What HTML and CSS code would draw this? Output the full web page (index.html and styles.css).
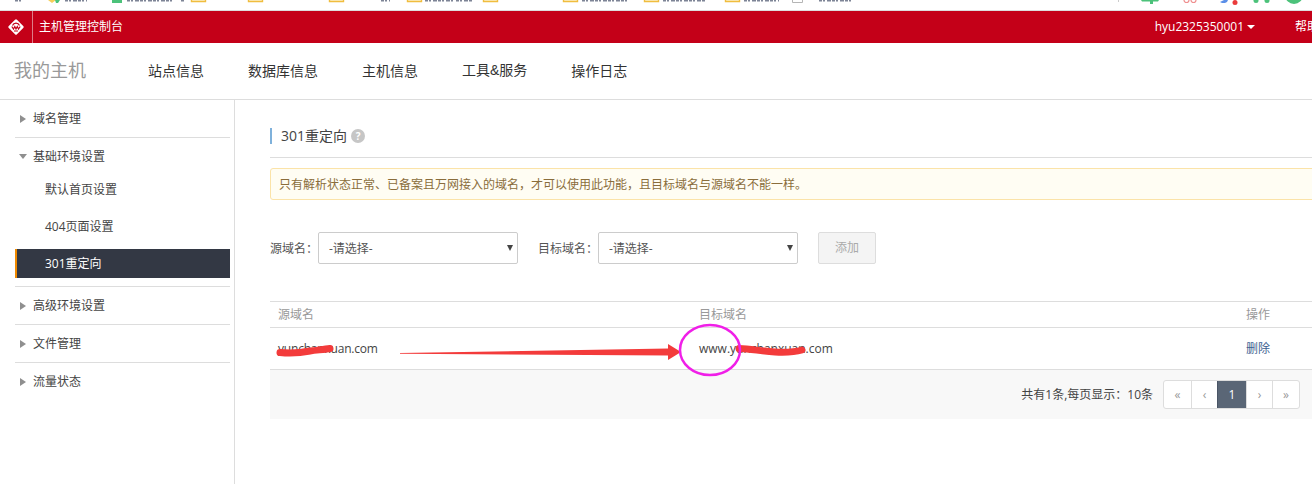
FILE: index.html
```html
<!DOCTYPE html>
<html lang="zh-CN">
<head>
<meta charset="utf-8">
<title>主机管理控制台</title>
<link rel="stylesheet" href="styles.css">
</head>
<body>
<div class="page">
  <svg class="chrome" width="1312" height="10" viewBox="0 0 1312 10" aria-hidden="true">
    <path class="bits" d="M15 .8h6M65 .8h22M127 .8h45M181 .8h3M381 .8h9M425 .8h28M456 .8h16M582 .8h46M663 .8h42M744 .8h35M819 .8h32"/>
    <g class="folder">
      <path d="M191.500 0v1.500h14V0"/><path d="M248.500 0v1.500h14V0"/><path d="M329.500 0v1.500h14V0"/><path d="M407.500 0v1.500h14V0"/>
      <path d="M483.500 0v1.500h14V0"/><path d="M563.500 0v1.500h14V0"/><path d="M644.500 0v1.500h14V0"/><path d="M725.500 0v1.500h14V0"/>
    </g>
    <path class="star" d="M48 0l4 3 4-3z"/>
    <path class="green" d="M55 0h5l-2 3h-2z"/>
    <rect class="green" x="112" y="0" width="10" height="3"/>
    <path class="box" d="M792.500 0v2.500h10V0"/>
    <rect class="divider" x="1118" y="0" width="1" height="2"/>
    <path class="green" d="M1141 0h18l-1 1.500h-5v2.500h-3v-2.500h-8z"/>
    <path class="rings" d="M1184 0a2.500 2.500 0 0 0 5 0M1191 0a2.500 2.500 0 0 0 5 0"/>
    <path class="blue" d="M1220 2l4-2h4l-1 2-2 1h-3z"/>
    <circle class="red" cx="1235" cy="2.500" r="2.500"/>
    <circle class="green" cx="1256" cy="0.500" r="2.500"/><circle class="green" cx="1267" cy="0.500" r="2.500"/>
    <circle class="green" cx="1294" cy="-5" r="9"/>
  </svg>

  <header class="topbar">
    <div class="brand-mark">
      <svg width="16" height="16" viewBox="0 0 16 16" aria-hidden="true">
        <path class="logo-d" d="M7 .8a1.400 1.400 0 0 1 2 0l6.200 6.200a1.400 1.400 0 0 1 0 2L9 15.200a1.400 1.400 0 0 1-2 0L.8 9a1.400 1.400 0 0 1 0-2z"/>
        <path class="logo-s" d="M4.500 6.500a3.800 3.800 0 0 1 7 0M3.800 7.500l1.700 2.500 1.300-2.500 1.200 2.500 1.300-2.500 1.200 2.500 1.700-2.500M6 12h4"/>
      </svg>
    </div>
    <div class="brand-name">主机管理控制台</div>
    <div class="user">hyu2325350001<i class="caret"></i></div>
    <div class="help">帮助中心</div>
  </header>

  <nav class="subnav">
    <div class="subnav-title">我的主机</div>
    <a>站点信息</a><a>数据库信息</a><a>主机信息</a><a>工具<span class="amp">&amp;</span>服务</a><a>操作日志</a>
  </nav>

  <div class="layout">
    <aside class="sidebar">
      <section class="group"><h3 class="group-head"><i class="tri"></i>域名管理</h3></section>
      <section class="group open">
        <h3 class="group-head"><i class="tri down"></i>基础环境设置</h3>
        <a class="item">默认首页设置</a>
        <a class="item">404页面设置</a>
        <a class="item active">301重定向</a>
      </section>
      <section class="group"><h3 class="group-head"><i class="tri"></i>高级环境设置</h3></section>
      <section class="group"><h3 class="group-head"><i class="tri"></i>文件管理</h3></section>
      <section class="group last"><h3 class="group-head"><i class="tri"></i>流量状态</h3></section>
    </aside>

    <main class="content">
      <div class="heading">
        <h2 class="heading-text">301重定向</h2>
        <span class="q">?</span>
      </div>
      <div class="notice">只有解析状态正常、已备案且万网接入的域名<span class="punc">，</span>才可以使用此功能<span class="punc">，</span>且目标域名与源域名不能一样。</div>
      <form class="form">
        <label class="lbl">源域名<span class="punc">：</span></label>
        <div class="sel"><span>-请选择-</span><i class="sel-arrow"></i></div>
        <label class="lbl second">目标域名<span class="punc">：</span></label>
        <div class="sel"><span>-请选择-</span><i class="sel-arrow"></i></div>
        <button class="add" type="button">添加</button>
      </form>
      <table class="grid">
        <thead><tr><th class="c1">源域名</th><th class="c2">目标域名</th><th>操作</th></tr></thead>
        <tbody><tr><td class="src">yunchanxuan.com</td><td>www.yunchanxuan.com</td><td><a class="del">删除</a></td></tr></tbody>
      </table>
      <div class="foot">
        <span class="count">共有1条,每页显示<span class="punc">：</span>10条</span>
        <div class="pager"><a>«</a><a>‹</a><a class="cur">1</a><a>›</a><a>»</a></div>
      </div>
    </main>
  </div>

  <svg class="marks" width="1312" height="484" viewBox="0 0 1312 484" aria-hidden="true">
    <path class="scribble" d="M280 352.500c10 1 20 .5 30-1.500 7-1 14-1.500 20-2.500"/>
    <path class="scribble" d="M739 348.500c12 0 22 3 36 3.500 11 .5 20 0 27-2"/>
    <path class="arrow" d="M400 353L668 348.500V344L681 352 668 360V355.500L400 353.700z"/>
    <ellipse class="ring" cx="710" cy="350" rx="30" ry="25"/>
  </svg>
</div>
</body>
</html>
```
FILE: styles.css
```css
* { box-sizing: border-box; }
html, body { margin: 0; height: 484px; overflow: hidden; background: #fff; }
body { font: 12px/1.5 "Open Sans", "Noto Sans CJK SC", sans-serif; color: #333; }
h2, h3 { margin: 0; font-weight: 400; font-size: inherit; }
i { font-style: normal; }
.punc { font-family: "Noto Sans CJK TC", sans-serif; }

.page { position: relative; width: 1340px; height: 484px; display: flex; flex-direction: column; }

/* clipped browser bookmark bar */
.chrome { display: block; flex: none; border: 0; }
.bits { fill: none; stroke: #7d8496; stroke-width: 1.5; stroke-dasharray: 3 1 2 2 4 1; }
.folder path { fill: #fdf3d2; stroke: #f0bd3e; stroke-width: 1.4; }
.star { fill: #f5cf5a; }
.green { fill: #4cc27a; }
.box { fill: none; stroke: #b5b5b5; }
.divider { fill: #ccc; }
.rings { fill: none; stroke: #ef8f8f; stroke-width: 1.2; }
.blue { fill: #5b8fe8; }
.red { fill: #ea3b3b; }

.topbar { flex: none; height: 33px; display: flex; align-items: center; background: #c40018; border-top: 1px solid #ddd; color: #fff; }
.brand-mark { width: 33px; height: 100%; display: flex; align-items: center; justify-content: center; border-right: 1px solid #de7d88; padding-right: 1px; }
.logo-d { fill: #fff; }
.logo-s { fill: none; stroke: #c40018; stroke-width: 1.2; }
.brand-name { margin-left: 6px; }
.user { margin-left: auto; display: flex; align-items: center; }
.caret { width: 0; height: 0; margin-left: 3px; border: 4px solid transparent; border-top-color: #fff; border-bottom: 0; }
.help { margin-left: 40px; margin-right: -3px; width: 48px; white-space: nowrap; }

.subnav { flex: none; height: 57px; display: flex; align-items: center; padding: 0 0 2px 14px; gap: 44px; background: #fff; border-bottom: 1px solid #ddd; font-size: 14px; color: #333; }
.subnav-title { width: 72px; margin-right: 18px; font-size: 18px; color: #999; }
.amp { font-family: "Liberation Sans", sans-serif; }

.layout { flex: 1; display: flex; min-height: 0; }
.sidebar { flex: none; width: 235px; padding-left: 15px; padding-right: 4px; border-right: 1px solid #ddd; }
.group { border-bottom: 1px solid #ddd; }
.group.last { border-bottom: 0; }
.group.open { padding-bottom: 8px; }
.group-head { height: 37px; display: flex; align-items: center; padding-left: 5px; color: #444; }
.tri { width: 0; height: 0; margin-right: 7px; border-style: solid; border-width: 4.500px 0 4.500px 6px; border-color: transparent transparent transparent #8f8f8f; }
.tri.down { margin-left: -1px; margin-right: 6px; border-width: 5px 4.500px 0; border-color: #8f8f8f transparent transparent; }
.item { display: flex; align-items: center; height: 29px; padding-left: 30px; color: #444; }
.item + .item { margin-top: 8px; }
.item.active { background: #333844; border-left: 2px solid #f08a00; padding-left: 28px; color: #fff; }

.content { flex: 1; min-width: 0; padding: 28px 0 0 35px; }
.heading { display: flex; align-items: center; padding-bottom: 13px; border-bottom: 1px solid #ddd; box-sizing: content-box; height: 16px; }
.heading-text { border-left: 2px solid #7fb1db; height: 16px; padding-left: 9px; font-size: 14px; line-height: 16px; color: #444; }
.q { width: 14px; height: 14px; margin-left: 4px; border-radius: 50%; background: #c6c6c6; color: #fff; font-size: 10px; line-height: 14px; text-align: center; font-weight: 700; }
.notice { height: 32px; margin-top: 10px; padding-left: 8px; line-height: 29px; background: #fffdf3; border: 1px solid #fbe3a8; border-radius: 3px; color: #8a6d3b; white-space: nowrap; }

.form { display: flex; align-items: center; height: 32px; margin-top: 32px; }
.lbl { flex: none; width: 48px; color: #555; white-space: nowrap; }
.lbl.second { width: 60px; margin-left: 20px; }
.sel { position: relative; flex: none; width: 200px; height: 32px; padding-left: 10px; line-height: 32px; border: 1px solid #ccc; border-radius: 2px; color: #555; background: #fff; }
.sel-arrow { position: absolute; right: 4px; top: 12px; width: 0; height: 0; border-style: solid; border-width: 6px 3px 0; border-color: #444 transparent transparent; }
.add { width: 58px; height: 32px; margin-left: 20px; padding: 0; font: inherit; color: #aaa; background: #f4f4f4; border: 1px solid #ddd; border-radius: 2px; }

.grid { width: 100%; margin-top: 37px; border-collapse: collapse; table-layout: fixed; }
.grid th { height: 26px; padding: 0 0 0 8px; font-weight: 400; text-align: left; color: #999; border-top: 1px solid #ddd; border-bottom: 1px solid #ddd; }
.grid td { height: 42px; padding: 0 0 0 8px; color: #444; border-bottom: 1px solid #ddd; }
.grid td.src { letter-spacing: -.2px; }
.c1 { width: 421px; }
.c2 { width: 547px; }
.del { color: #3d5f90; }

.foot { height: 49px; display: flex; align-items: center; justify-content: flex-end; padding-right: 40px; background: #f8f8f8; }
.count { margin-right: 10px; color: #444; }
.pager { display: flex; height: 29px; background: #fff; border: 1px solid #ddd; border-radius: 3px; }
.pager a { width: 26px; display: flex; align-items: center; justify-content: center; border-left: 1px solid #ddd; color: #999; }
.pager a:first-child { width: 27px; border-left: 0; }
.pager a:last-child { width: 27px; }
.pager a.cur { width: 29px; background: #5a6676; color: #fff; border-left-color: #4a5566; }

.marks { position: absolute; left: 0; top: 0; pointer-events: none; }
.scribble { fill: none; stroke: #f33b3b; stroke-width: 7; stroke-linecap: round; }
.arrow { fill: #f33b3b; }
.ring { fill: none; stroke: #f01fe8; stroke-width: 2.500; }
```
